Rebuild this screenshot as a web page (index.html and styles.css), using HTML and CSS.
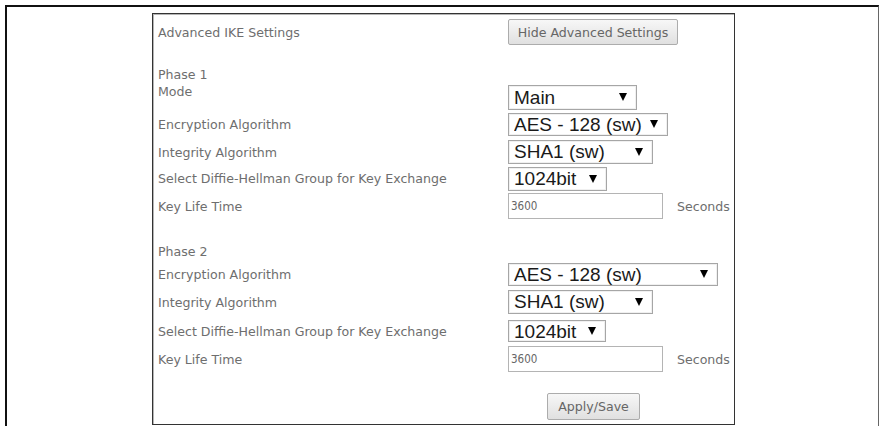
FILE: index.html
```html
<!DOCTYPE html>
<html>
<head>
<meta charset="utf-8">
<link rel="stylesheet" href="styles.css">
</head>
<body>
<div class="frame">
  <div class="panel">
    <div class="row r-head">
      <div class="label">Advanced IKE Settings</div>
      <div class="ctrl"><button class="btn btn-hide">Hide Advanced Settings</button></div>
    </div>
    <div class="row r-gap1"></div>
    <div class="row r-phase"><div class="label">Phase 1</div></div>
    <div class="row r-mode">
      <div class="label label-up">Mode</div>
      <div class="ctrl"><span class="sel w-main"><select><option>Main</option></select></span></div>
    </div>
    <div class="row r-27">
      <div class="label">Encryption Algorithm</div>
      <div class="ctrl"><span class="sel w-aes"><select><option>AES - 128 (sw)</option></select></span></div>
    </div>
    <div class="row r-28">
      <div class="label">Integrity Algorithm</div>
      <div class="ctrl"><span class="sel w-sha"><select><option>SHA1 (sw)</option></select></span></div>
    </div>
    <div class="row r-25">
      <div class="label">Select Diffie-Hellman Group for Key Exchange</div>
      <div class="ctrl"><span class="sel w-dh"><select><option>1024bit</option></select></span></div>
    </div>
    <div class="row r-30">
      <div class="label">Key Life Time</div>
      <div class="ctrl"><input class="txt" type="text" value="3600"><span class="unit">Seconds</span></div>
    </div>
    <div class="row r-gap2"></div>
    <div class="row r-phase"><div class="label">Phase 2</div></div>
    <div class="row r-26">
      <div class="label">Encryption Algorithm</div>
      <div class="ctrl"><span class="sel w-aes2"><select><option>AES - 128 (sw)</option></select></span></div>
    </div>
    <div class="row r-30">
      <div class="label">Integrity Algorithm</div>
      <div class="ctrl"><span class="sel w-sha"><select><option>SHA1 (sw)</option></select></span></div>
    </div>
    <div class="row r-28">
      <div class="label">Select Diffie-Hellman Group for Key Exchange</div>
      <div class="ctrl"><span class="sel w-dh2"><select><option>1024bit</option></select></span></div>
    </div>
    <div class="row r-28">
      <div class="label">Key Life Time</div>
      <div class="ctrl"><input class="txt" type="text" value="3600"><span class="unit">Seconds</span></div>
    </div>
    <div class="actions"><button class="btn btn-apply">Apply/Save</button></div>
  </div>
</div>
</body>
</html>
```

FILE: styles.css
```css
html, body {
  margin: 0;
  padding: 0;
  background: #fff;
}

.frame {
  margin: 5px 3px 0 5px;
  padding: 6px 0 0 145px;
  border-top: 2px solid #111;
  border-left: 2px solid #111;
  border-right: 1px solid #666;
  box-sizing: border-box;
  height: 421px;
}

.panel {
  width: 583px;
  height: 412px;
  box-sizing: border-box;
  border: 1px solid #333;
  box-shadow: inset 1px 1px 0 #b5b5b5;
  display: flex;
  flex-direction: column;
  padding-left: 5px;
  font-family: "DejaVu Sans", Verdana, sans-serif;
  font-size: 12.6px;
  color: #6e6e6e;
}

.row {
  display: flex;
  align-items: center;
  flex: none;
}

.label {
  width: 350px;
  flex: none;
  white-space: nowrap;
}

.label-up {
  align-self: flex-start;
  padding-top: 0;
}

.ctrl {
  display: flex;
  align-items: center;
}

.r-head { height: 36px; }
.r-gap1 { height: 14px; }
.r-phase { height: 20px; }
.r-mode { height: 27px; }
.r-25 { height: 25px; }
.r-26 { height: 26px; }
.r-27 { height: 27px; }
.r-28 { height: 28px; }
.r-30 { height: 30px; }
.r-gap2 { height: 20px; }

.btn {
  font-family: "DejaVu Sans", Verdana, sans-serif;
  font-size: 12.6px;
  color: #666;
  background: linear-gradient(#f7f7f7, #e0e0e0);
  border: 1px solid #acacac;
  border-radius: 2px;
  padding: 0;
  margin: 0;
}

.btn-hide {
  width: 170px;
  height: 26px;
}

.btn-apply {
  width: 93px;
  height: 27px;
}

.actions {
  margin-top: 20px;
  padding-left: 389px;
  display: flex;
}

.sel {
  position: relative;
  display: inline-block;
  height: 24px;
}

.sel select {
  -webkit-appearance: none;
  appearance: none;
  width: 100%;
  height: 100%;
  margin: 0;
  padding: 0 0 0 5px;
  border: 1px solid #a6a6a6;
  border-radius: 0;
  background: #fff;
  color: #1a1a1a;
  font-family: "Liberation Sans", Arial, sans-serif;
  font-size: 19px;
  line-height: 22px;
  box-shadow: inset 0 0 0 1px #f0f0f0;
}

.sel::after {
  content: "";
  position: absolute;
  right: 10px;
  top: 8px;
  width: 0;
  height: 0;
  border-left: 4px solid transparent;
  border-right: 4px solid transparent;
  border-top: 8px solid #000;
  pointer-events: none;
}

.w-main { width: 129px; height: 25px; }
.w-aes { width: 160px; height: 23px; }
.w-sha { width: 145px; }
.w-dh { width: 99px; }
.w-aes2 { width: 210px; height: 23px; }
.w-dh2 { width: 98px; height: 22px; }

.w-aes::after, .w-aes2::after { top: 7px; }
.w-dh2::after { top: 7px; }

.txt {
  width: 155px;
  height: 26px;
  box-sizing: border-box;
  margin: 0;
  padding: 0 2px;
  border: 1px solid #b4b4b4;
  font-family: "DejaVu Sans Condensed", "DejaVu Sans", sans-serif;
  font-size: 11.5px;
  color: #666;
  background: #fff;
  outline: none;
}

.unit {
  margin-left: 14px;
  white-space: nowrap;
}
```
